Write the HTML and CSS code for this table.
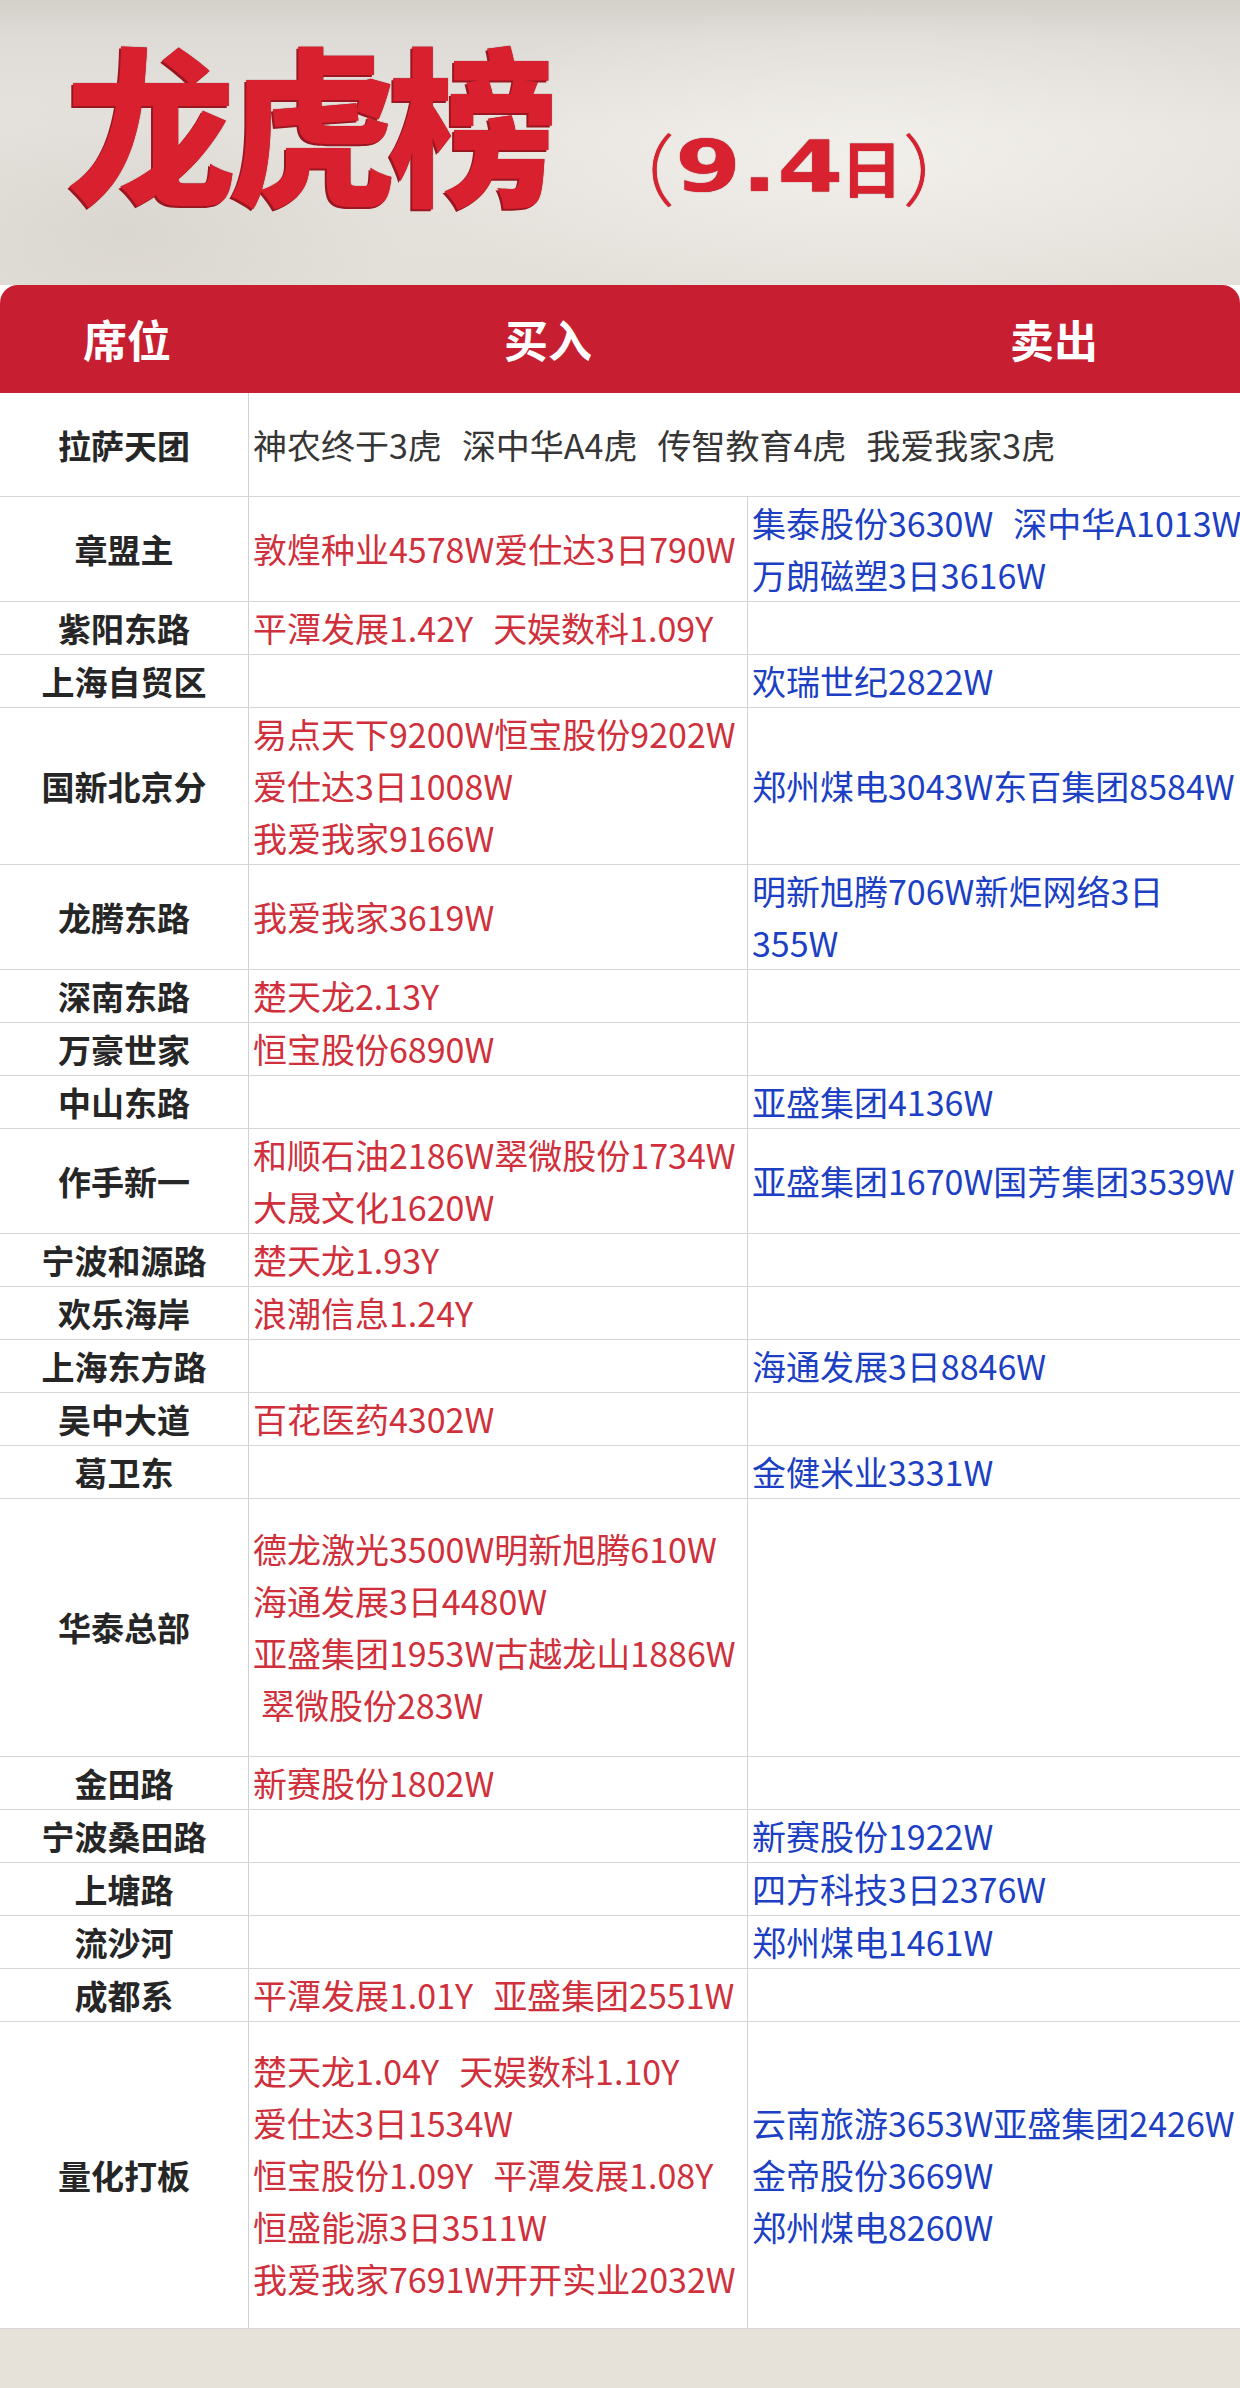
FILE: index.html
```html
<!DOCTYPE html>
<html lang="zh-CN">
<head>
<meta charset="utf-8">
<title>龙虎榜（9.4日）</title>
<link rel="stylesheet" href="styles.css">
</head>
<body>
<div class="page">
  <header class="hero">
    <h1 class="title">龙虎榜</h1>
    <div class="date"><span class="paren">（</span><span class="num">9.4</span><span class="day">日</span><span class="paren close">）</span></div>
  </header>

  <section class="board">
    <div class="thead">
      <span class="h h1">席位</span>
      <span class="h h2">买入</span>
      <span class="h h3">卖出</span>
    </div>

    <div class="row r-lasa">
      <div class="c seat">拉萨天团</div>
      <div class="c buy plain span2"><div>神农终于3虎<span class="sp"></span>深中华A4虎<span class="sp"></span>传智教育4虎<span class="sp"></span>我爱我家3虎</div></div>
    </div>

    <div class="row">
      <div class="c seat">章盟主</div>
      <div class="c buy"><div>敦煌种业4578W爱仕达3日790W</div></div>
      <div class="c sell"><div>集泰股份3630W<span class="sp"></span>深中华A1013W<br>万朗磁塑3日3616W</div></div>
    </div>

    <div class="row">
      <div class="c seat">紫阳东路</div>
      <div class="c buy"><div>平潭发展1.42Y<span class="sp"></span>天娱数科1.09Y</div></div>
      <div class="c sell"></div>
    </div>

    <div class="row">
      <div class="c seat">上海自贸区</div>
      <div class="c buy"></div>
      <div class="c sell"><div>欢瑞世纪2822W</div></div>
    </div>

    <div class="row">
      <div class="c seat">国新北京分</div>
      <div class="c buy"><div>易点天下9200W恒宝股份9202W<br>爱仕达3日1008W<br>我爱我家9166W</div></div>
      <div class="c sell"><div>郑州煤电3043W东百集团8584W</div></div>
    </div>

    <div class="row">
      <div class="c seat">龙腾东路</div>
      <div class="c buy"><div>我爱我家3619W</div></div>
      <div class="c sell"><div>明新旭腾706W新炬网络3日<br>355W</div></div>
    </div>

    <div class="row">
      <div class="c seat">深南东路</div>
      <div class="c buy"><div>楚天龙2.13Y</div></div>
      <div class="c sell"></div>
    </div>

    <div class="row">
      <div class="c seat">万豪世家</div>
      <div class="c buy"><div>恒宝股份6890W</div></div>
      <div class="c sell"></div>
    </div>

    <div class="row">
      <div class="c seat">中山东路</div>
      <div class="c buy"></div>
      <div class="c sell"><div>亚盛集团4136W</div></div>
    </div>

    <div class="row">
      <div class="c seat">作手新一</div>
      <div class="c buy"><div>和顺石油2186W翠微股份1734W<br>大晟文化1620W</div></div>
      <div class="c sell"><div>亚盛集团1670W国芳集团3539W</div></div>
    </div>

    <div class="row">
      <div class="c seat">宁波和源路</div>
      <div class="c buy"><div>楚天龙1.93Y</div></div>
      <div class="c sell"></div>
    </div>

    <div class="row">
      <div class="c seat">欢乐海岸</div>
      <div class="c buy"><div>浪潮信息1.24Y</div></div>
      <div class="c sell"></div>
    </div>

    <div class="row">
      <div class="c seat">上海东方路</div>
      <div class="c buy"></div>
      <div class="c sell"><div>海通发展3日8846W</div></div>
    </div>

    <div class="row">
      <div class="c seat">吴中大道</div>
      <div class="c buy"><div>百花医药4302W</div></div>
      <div class="c sell"></div>
    </div>

    <div class="row">
      <div class="c seat">葛卫东</div>
      <div class="c buy"></div>
      <div class="c sell"><div>金健米业3331W</div></div>
    </div>

    <div class="row r-huatai">
      <div class="c seat">华泰总部</div>
      <div class="c buy"><div>德龙激光3500W明新旭腾610W<br>海通发展3日4480W<br>亚盛集团1953W古越龙山1886W<br><span class="indent"></span>翠微股份283W</div></div>
      <div class="c sell"></div>
    </div>

    <div class="row">
      <div class="c seat">金田路</div>
      <div class="c buy"><div>新赛股份1802W</div></div>
      <div class="c sell"></div>
    </div>

    <div class="row">
      <div class="c seat">宁波桑田路</div>
      <div class="c buy"></div>
      <div class="c sell"><div>新赛股份1922W</div></div>
    </div>

    <div class="row">
      <div class="c seat">上塘路</div>
      <div class="c buy"></div>
      <div class="c sell"><div>四方科技3日2376W</div></div>
    </div>

    <div class="row">
      <div class="c seat">流沙河</div>
      <div class="c buy"></div>
      <div class="c sell"><div>郑州煤电1461W</div></div>
    </div>

    <div class="row">
      <div class="c seat">成都系</div>
      <div class="c buy"><div>平潭发展1.01Y<span class="sp"></span>亚盛集团2551W</div></div>
      <div class="c sell"></div>
    </div>

    <div class="row r-quant">
      <div class="c seat">量化打板</div>
      <div class="c buy"><div>楚天龙1.04Y<span class="sp"></span>天娱数科1.10Y<br>爱仕达3日1534W<br>恒宝股份1.09Y<span class="sp"></span>平潭发展1.08Y<br>恒盛能源3日3511W<br>我爱我家7691W开开实业2032W</div></div>
      <div class="c sell"><div>云南旅游3653W亚盛集团2426W<br>金帝股份3669W<br>郑州煤电8260W</div></div>
    </div>
  </section>

  <div class="foot"></div>
</div>
</body>
</html>
```

FILE: styles.css
```css
html, body {
  margin: 0;
  padding: 0;
}

body {
  width: 1240px;
  min-height: 2388px;
  font-family: "Noto Sans CJK SC", "Noto Sans", sans-serif;
  background: #e6e1d9;
  overflow: hidden;
}

.page {
  display: flex;
  flex-direction: column;
  width: 1240px;
}

/* ---------- hero ---------- */
.hero {
  height: 285px;
  box-sizing: border-box;
  display: flex;
  align-items: flex-start;
  padding: 26px 0 0 62px;
  background:
    radial-gradient(ellipse 700px 220px at 70% 55%, rgba(250, 248, 244, 0.6), rgba(250, 248, 244, 0) 70%),
    radial-gradient(ellipse 400px 200px at 10% 80%, rgba(200, 195, 188, 0.35), rgba(200, 195, 188, 0) 70%),
    linear-gradient(180deg, #d4d0ca 0%, #dfdcd7 14%, #e6e3de 45%, #e3dfd9 100%);
}

.title {
  margin: 0;
  padding: 0 10px 0 4px;
  font-size: 170px;
  line-height: 1.1;
  font-weight: 900;
  letter-spacing: -9px;
  color: #d8202e;
  text-shadow: -2px 2px 0 #9a1620, 0 0 1px #7e121a;
}

.date {
  display: flex;
  align-items: center;
  margin: 101px 0 0 38px;
  color: #d8222f;
  line-height: 1;
  text-shadow: 0 0 1px #8a1a22;
}

.paren {
  font-size: 78px;
  font-weight: 300;
}

.num {
  display: inline-block;
  font-family: "DejaVu Sans", sans-serif;
  font-weight: 700;
  font-size: 72px;
  transform: scaleX(1.32);
  transform-origin: left center;
  margin-right: 44px;
}

.day {
  font-size: 62px;
  font-weight: 700;
  margin-left: -6px;
}

/* ---------- table ---------- */
.board {
  background: #ffffff;
  display: flex;
  flex-direction: column;
}

.thead {
  height: 108px;
  box-sizing: border-box;
  background: #c71f31;
  border-radius: 18px 18px 0 0;
  display: flex;
  align-items: center;
  color: #ffffff;
  font-size: 44px;
  font-weight: 700;
  line-height: 1;
}

.h {
  display: block;
}

.h1 { margin-left: 83px; }
.h2 { margin-left: 333px; }
.h3 { margin-left: 418px; }

.row {
  display: grid;
  grid-template-columns: 249px 499px 492px;
  border-bottom: 1px solid #d6d6d6;
}

.c {
  display: flex;
  align-items: center;
  box-sizing: border-box;
  font-size: 34px;
  line-height: 52px;
  white-space: nowrap;
  overflow: hidden;
}

.seat {
  justify-content: center;
  border-right: 1px solid #d2d2d2;
  font-size: 33px;
  font-weight: 700;
  color: #262626;
}

.buy {
  border-right: 1px solid #d2d2d2;
  padding-left: 4px;
  color: #d0303b;
}

.buy.plain {
  color: #363636;
}

.buy.span2 {
  grid-column: 2 / 4;
  border-right: 0;
}

.sell {
  padding-left: 4px;
  color: #1c3fc4;
}

.sp {
  display: inline-block;
  width: 20px;
}

.indent {
  display: inline-block;
  width: 8px;
}

.r-lasa .c {
  min-height: 103px;
}

.r-huatai .c {
  padding-top: 24px;
  padding-bottom: 25px;
}

.r-quant .c {
  padding-top: 23px;
  padding-bottom: 23px;
}

/* ---------- bottom paper ---------- */
.foot {
  flex: 1;
  height: 60px;
  background: linear-gradient(90deg, #ddd6cc 0%, #e8e3db 35%, #ebe6df 65%, #e4ded5 100%);
}
```
